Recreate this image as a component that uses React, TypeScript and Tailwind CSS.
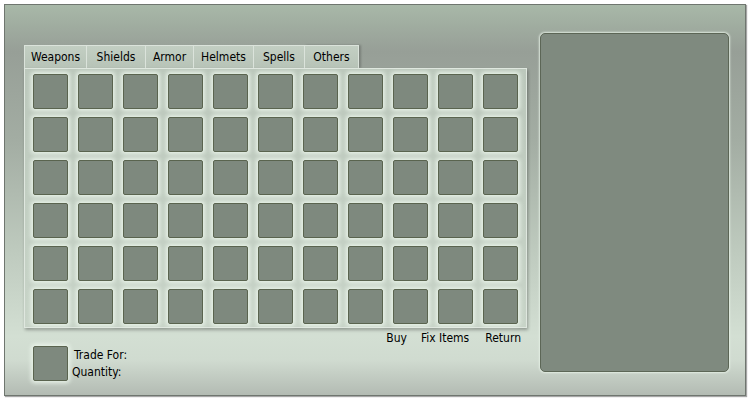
import React from "react";

const tabs = ["Weapons", "Shields", "Armor", "Helmets", "Spells", "Others"];
const tabWidths = ["w-[62px]", "w-[59px]", "w-[48px]", "w-[60px]", "w-[51px]", "w-[55px]"];

const Slot = () => (
    <div className="w-[35px] h-[35px] rounded-[2px] border border-[#5a644f] bg-[#7e897e] shadow-[0_0_4px_2px_rgba(236,246,236,0.9)]" />
);

export default function App() {
    return (
        <div className="w-[750px] h-[400px] bg-white p-[4px] font-['DejaVu_Sans_Condensed','DejaVu_Sans',sans-serif] text-[12px] text-black">
            <div className="w-[742px] h-[392px] border border-[#6f766f] shadow-[1px_1px_1px_rgba(0,0,0,0.35)] bg-[linear-gradient(to_bottom,#a8b8a8_0%,#9fab9f_6%,#979f97_12%,#a3ada3_35%,#bdc9bd_62%,#d3dfd3_85%,#d0dbd0_91%,#b3bbb3_100%)] flex pl-[19px] pt-[28px]">
                {/* left column */}
                <div className="w-[503px] pt-[12px] flex flex-col">
                    <div className="flex h-[23px]">
                        {tabs.map((t, i) => (
                            <div
                                key={t}
                                className={`${tabWidths[i]} h-[23px] flex items-center justify-center border-t border-l border-[#dbe3db] bg-[linear-gradient(to_bottom,#c3cfc3,#b7c3b7)] ${i === tabs.length - 1 ? "border-r shadow-[2px_0_2px_rgba(0,0,0,0.2)]" : ""}`}
                            >
                                {t}
                            </div>
                        ))}
                    </div>
                    <div className="h-[260px] border border-[#dfe7df] bg-[linear-gradient(to_bottom,#bcc8bc,#c8d4c8)] shadow-[1px_2px_3px_rgba(0,0,0,0.3)] pl-[8px] pt-[5px] grid grid-cols-[repeat(11,35px)] grid-rows-[repeat(6,35px)] gap-x-[10px] gap-y-[8px]">
                        {Array.from({ length: 66 }).map((_, i) => (
                            <Slot key={i} />
                        ))}
                    </div>
                    <div className="mt-[3px] h-[14px] flex justify-end pr-[6px] leading-[14px]">
                        <span>Buy</span>
                        <span className="ml-[14px]">Fix Items</span>
                        <span className="ml-[16px]">Return</span>
                    </div>
                    <div className="mt-[1px] flex pl-[9px]">
                        <Slot />
                        <div className="flex flex-col leading-[17px] pt-[1px]">
                            <span className="pl-[6px]">Trade For:</span>
                            <span className="pl-[4px]">Quantity:</span>
                        </div>
                    </div>
                </div>
                {/* right panel */}
                <div className="ml-[13px] w-[189px] h-[339px] rounded-[5px] border border-[#5c6656] bg-[#7f8a7f] shadow-[0_0_2px_1px_rgba(230,240,230,0.9)]" />
            </div>
        </div>
    );
}
